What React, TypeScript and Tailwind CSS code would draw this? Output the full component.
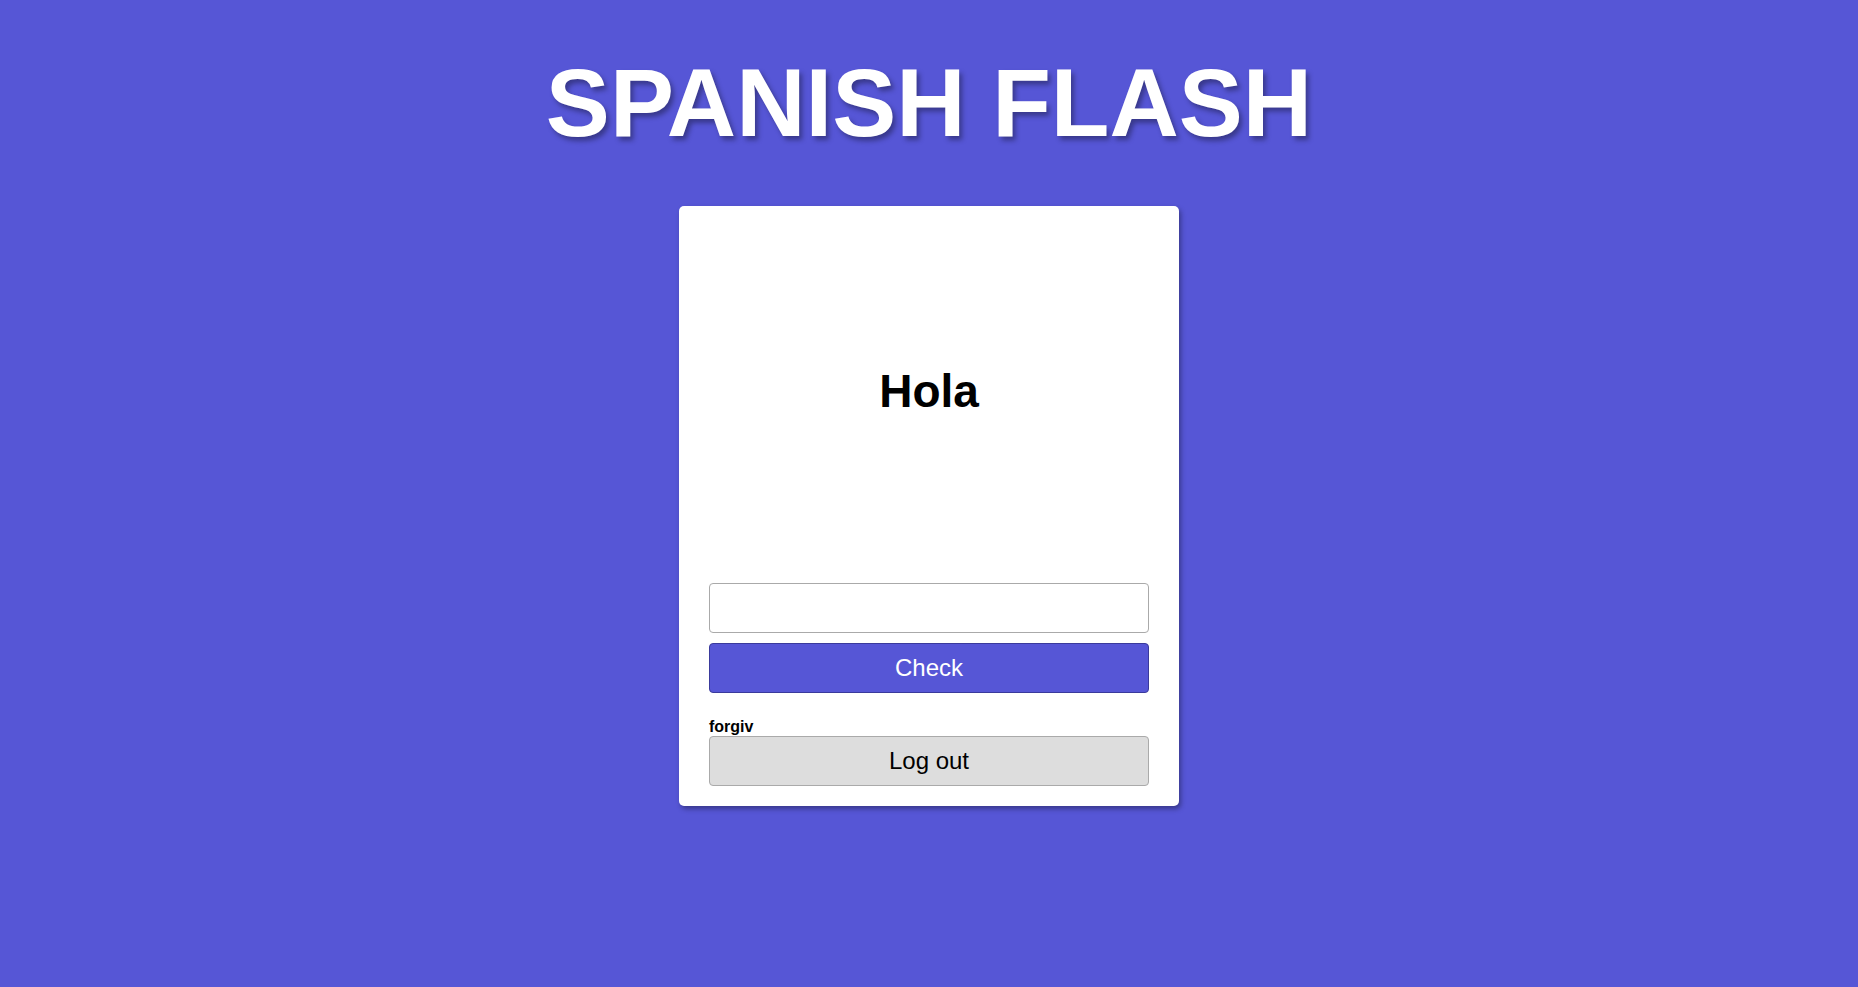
import { useState } from 'react';

export default function App() {
  const [answer, setAnswer] = useState('');

  return (
    <div className="min-h-screen w-full bg-[#5656d6] flex flex-col items-center font-['Liberation_Sans',Arial,sans-serif]">
      <h1 className="mt-[55px] text-[96px] leading-none font-bold text-white [text-shadow:3px_4px_5px_rgba(0,0,0,0.35)]">
        SPANISH FLASH
      </h1>

      <div className="mt-[55px] w-[500px] h-[600px] bg-white rounded-[5px] shadow-[2px_3px_5px_rgba(0,0,0,0.35)] flex flex-col px-[30px] pb-[20px]">
        <div className="flex-1 flex items-center justify-center pb-[6px]">
          <h2 className="text-[46px] font-bold text-black">Hola</h2>
        </div>

        <input
          type="text"
          value={answer}
          onChange={(e) => setAnswer(e.target.value)}
          className="h-[50px] w-full border border-[#aaaaaa] rounded-[4px] px-3 text-[20px] outline-none"
        />
        <button className="mt-[10px] h-[50px] w-full bg-[#5656d6] border border-[#3a3a9c] rounded-[4px] text-white text-[24px]">
          Check
        </button>

        <p className="mt-[25px] text-[16px] leading-[18px] font-bold text-black">forgiv</p>
        <button className="h-[50px] w-full bg-[#dddddd] border border-[#aaaaaa] rounded-[4px] text-black text-[24px]">
          Log out
        </button>
      </div>
    </div>
  );
}
